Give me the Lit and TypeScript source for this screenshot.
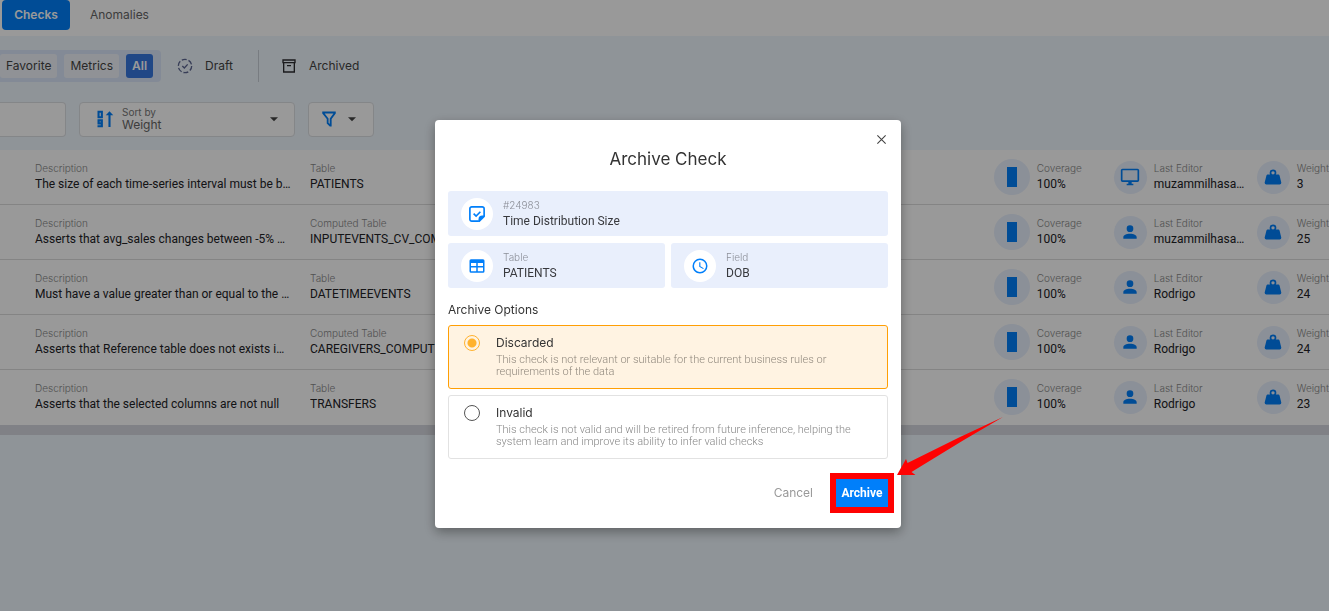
import { LitElement, html, svg, css } from "lit";
import { customElement, property, state } from "lit/decorators.js";
import { classMap } from "lit/directives/class-map.js";

type IconName = keyof typeof ICONS;

const ICONS = {
  account: svg`<path d="M12,4A4,4 0 0,1 16,8A4,4 0 0,1 12,12A4,4 0 0,1 8,8A4,4 0 0,1 12,4M12,14C16.42,14 20,15.79 20,18V20H4V18C4,15.79 7.58,14 12,14Z"/>`,
  weight: svg`<path d="M12,3A4,4 0 0,1 16,7C16,7.73 15.81,8.41 15.46,9H18C18.95,9 19.75,9.67 19.95,10.56C21.96,18.57 22,18.78 22,19A2,2 0 0,1 20,21H4A2,2 0 0,1 2,19C2,18.78 2.04,18.57 4.05,10.56C4.25,9.67 5.05,9 6,9H8.54C8.19,8.41 8,7.73 8,7A4,4 0 0,1 12,3M12,5A2,2 0 0,0 10,7A2,2 0 0,0 12,9A2,2 0 0,0 14,7A2,2 0 0,0 12,5Z"/>`,
  monitor: svg`<path d="M21,16H3V4H21M21,2H3C1.89,2 1,2.89 1,4V16A2,2 0 0,0 3,18H10V20H8V22H16V20H14V18H21A2,2 0 0,0 23,16V4C23,2.89 22.1,2 21,2Z"/>`,
  clock: svg`<path d="M12,20A8,8 0 0,0 20,12A8,8 0 0,0 12,4A8,8 0 0,0 4,12A8,8 0 0,0 12,20M12,2A10,10 0 0,1 22,12A10,10 0 0,1 12,22C6.47,22 2,17.5 2,12A10,10 0 0,1 12,2M12.5,7V12.25L17,14.92L16.25,16.15L11,13V7H12.5Z"/>`,
  filter: svg`<path fill-rule="evenodd" d="M3 2H21V4.6L15.5 12V22H13L9 18V12L3 4.6ZM6.2 4.5L11.4 11.2V17L13 18.6V11.2L17.9 4.5Z"/>`,
  table: svg`<path fill-rule="evenodd" d="M4 3H20A2 2 0 0 1 22 5V19A2 2 0 0 1 20 21H4A2 2 0 0 1 2 19V5A2 2 0 0 1 4 3M4 8V12H11V8ZM13 8V12H20V8ZM4 14V19H11V14ZM13 14V19H20V14Z"/>`,
  archive: svg`<path fill-rule="evenodd" d="M2 2H22V8H21V22H3V8H2ZM4 4V6H20V4ZM5 8V20H19V8ZM9 10.5H15V12.5H9Z"/>`,
  note: svg`<path fill="none" stroke="currentColor" stroke-width="2.2" d="M14.5 21.5H5A2.5 2.5 0 0 1 2.5 19V5A2.5 2.5 0 0 1 5 2.5H19A2.5 2.5 0 0 1 21.5 5V14.5"/><path d="M22.6 14V15.5L15.5 22.6H14V19A5 5 0 0 1 19 14Z"/><path fill="none" stroke="currentColor" stroke-width="2.2" d="M7.5 11.5L10.8 14.8L16.5 9"/>`,
  draft: svg`<circle cx="12" cy="12" r="10" fill="none" stroke="currentColor" stroke-width="2" stroke-dasharray="7.5 2.97"/><path fill="none" stroke="currentColor" stroke-width="2" d="M8 12L11 15L16 9.5"/>`,
  sort: svg`<path fill="none" stroke="currentColor" stroke-width="2.8" d="M3.4 2.4H7.8V9.6H3.4ZM7.8 17.8H3.4V13.8H7.8V21.6H2M18 22.5V4"/><path d="M13 7L18 1.5L23 7Z"/>`,
  caret: svg`<path d="M4 8.5H20L12 16.5Z"/>`,
  close: svg`<path fill="none" stroke="currentColor" stroke-width="2.4" d="M3 3L21 21M21 3L3 21"/>`,
};

@customElement("ui-icon")
class UiIcon extends LitElement {
  @property() name: IconName = "account";
  @property({ type: Number }) size = 16;

  static styles = css`
    :host {
      display: inline-flex;
      flex: none;
    }
    .glyph {
      display: block;
      fill: currentColor;
    }
  `;

  render() {
    return html`<svg class="glyph" width=${this.size} height=${this.size} viewBox="0 0 24 24" aria-hidden="true">${ICONS[this.name]}</svg>`;
  }
}

@customElement("labelled-value")
class LabelledValue extends LitElement {
  @property() label = "";
  @property() value = "";

  static styles = css`
    :host {
      display: block;
      min-width: 0;
      white-space: nowrap;
    }
    .label {
      font-size: 10px;
      line-height: 14px;
      font-weight: 300;
      color: var(--label-color, #888);
    }
    .value {
      font-family: Roboto, "Liberation Sans", sans-serif;
      font-size: 12px;
      line-height: 18px;
      font-weight: var(--value-weight, 450);
      color: var(--value-color, #222226);
    }
  `;

  render() {
    return html`<div class="label">${this.label}</div><div class="value">${this.value}</div>`;
  }
}

interface CheckRow {
  description: string;
  kind: string;
  table: string;
  editor: string;
  editorIcon: IconName;
  weight: string;
}

const CHECKS: CheckRow[] = [
  { description: "The size of each time-series interval must be b…", kind: "Table", table: "PATIENTS", editor: "muzammilhasa…", editorIcon: "monitor", weight: "3" },
  { description: "Asserts that avg_sales changes between -5% …", kind: "Computed Table", table: "INPUTEVENTS_CV_COMPUTED", editor: "muzammilhasa…", editorIcon: "account", weight: "25" },
  { description: "Must have a value greater than or equal to the …", kind: "Table", table: "DATETIMEEVENTS", editor: "Rodrigo", editorIcon: "account", weight: "24" },
  { description: "Asserts that Reference table does not exists i…", kind: "Computed Table", table: "CAREGIVERS_COMPUTED", editor: "Rodrigo", editorIcon: "account", weight: "24" },
  { description: "Asserts that the selected columns are not null", kind: "Table", table: "TRANSFERS", editor: "Rodrigo", editorIcon: "account", weight: "23" },
];

@customElement("check-list")
class CheckList extends LitElement {
  static styles = css`
    :host {
      display: block;
    }
    .list {
      list-style: none;
      margin: 0;
      padding: 0;
      background: #fff;
      border-bottom: 10px solid #d6d8df;
    }
    .row {
      display: flex;
      align-items: center;
      height: 54px;
      padding-left: 35px;
      overflow: hidden;
      border-bottom: 1px solid #dcdcdc;
    }
    .row:last-child {
      border-bottom-color: transparent;
    }
    .description {
      flex: 0 0 275px;
    }
    .table {
      flex: 1;
      overflow: hidden;
    }
    .coverage {
      flex: 0 0 120px;
    }
    .editor {
      flex: 0 0 143px;
    }
    .weight {
      flex: 0 0 71px;
    }
    .stats {
      display: flex;
      flex: 0 0 335px;
    }
    .stat {
      display: flex;
      align-items: center;
      gap: 7px;
    }
    .badge {
      display: flex;
      flex: none;
      align-items: center;
      justify-content: center;
      width: 33px;
      height: 33px;
      border-radius: 50%;
      background: #e8f0fd;
      color: #007ffa;
    }
    .gauge {
      width: 36px;
      height: 36px;
    }
    .bar {
      width: 10px;
      height: 20px;
      background: #007ffa;
    }
  `;

  render() {
    return html`<ul class="list">
      ${CHECKS.map(
        (c) => html`<li class="row">
          <labelled-value class="description" label="Description" value=${c.description}></labelled-value>
          <labelled-value class="table" label=${c.kind} value=${c.table}></labelled-value>
          <div class="stats">
            <div class="stat coverage">
              <span class="badge gauge"><span class="bar"></span></span>
              <labelled-value label="Coverage" value="100%"></labelled-value>
            </div>
            <div class="stat editor">
              <span class="badge"><ui-icon name=${c.editorIcon} size="20"></ui-icon></span>
              <labelled-value label="Last Editor" value=${c.editor}></labelled-value>
            </div>
            <div class="stat weight">
              <span class="badge"><ui-icon name="weight" size="20"></ui-icon></span>
              <labelled-value label="Weight" value=${c.weight}></labelled-value>
            </div>
          </div>
        </li>`
      )}
    </ul>`;
  }
}

const OPTIONS = [
  { id: "discarded", title: "Discarded", lines: ["This check is not relevant or suitable for the current business rules or", "requirements of the data"] },
  { id: "invalid", title: "Invalid", lines: ["This check is not valid and will be retired from future inference, helping the", "system learn and improve its ability to infer valid checks"] },
];

@customElement("archive-dialog")
class ArchiveDialog extends LitElement {
  @state() private choice = "discarded";

  static styles = css`
    :host {
      display: block;
      width: 466px;
      box-sizing: border-box;
      padding: 10px 13px 21px;
      border-radius: 4px;
      background: #fff;
      color: #333;
      box-shadow: 0 4px 12px rgba(0, 0, 0, 0.35);
    }
    .top {
      display: flex;
      justify-content: flex-end;
    }
    button {
      font: inherit;
      border: 0;
      background: none;
      cursor: pointer;
    }
    .close {
      display: flex;
      padding: 4px 1px 3px;
      color: #444;
    }
    .title {
      margin: 0 0 21px;
      font-size: 17px;
      line-height: 22px;
      font-weight: 400;
      text-align: center;
    }
    .cards {
      display: grid;
      grid-template-columns: 1fr 1fr;
      gap: 7px 6px;
      --label-color: #8c8f98;
      --value-color: #38393d;
      --value-weight: 400;
    }
    .card {
      display: flex;
      align-items: center;
      gap: 10px;
      height: 45px;
      padding-left: 13px;
      border-radius: 3px;
      background: #e9effc;
    }
    .wide {
      grid-column: 1 / -1;
    }
    .badge {
      display: flex;
      align-items: center;
      justify-content: center;
      width: 32px;
      height: 32px;
      border-radius: 50%;
      background: #fff;
      color: #007ffa;
    }
    .options {
      display: flex;
      flex-direction: column;
      gap: 6px;
      margin: 0;
      padding: 0;
      border: 0;
    }
    .heading {
      padding: 14px 0 7px;
      font-size: 12px;
      line-height: 16px;
    }
    .option {
      display: flex;
      gap: 16px;
      height: 64px;
      box-sizing: border-box;
      padding: 9px 15px;
      border: 1px solid #e2e2e2;
      border-radius: 3px;
      cursor: pointer;
    }
    .chosen {
      border-color: #ff9f05;
      background: #fff3e2;
    }
    .radio {
      appearance: none;
      flex: none;
      box-sizing: border-box;
      width: 16px;
      height: 16px;
      margin: 0;
      border: 1px solid #555;
      border-radius: 50%;
      background: #fff;
    }
    .radio:checked {
      border-color: #ffb22e;
      background: radial-gradient(circle, #ffb22e 4px, transparent 5px);
    }
    .name {
      display: block;
      font-size: 12px;
      line-height: 16px;
    }
    .hint {
      display: block;
      margin-top: 3px;
      font-family: Roboto, sans-serif;
      font-size: 11px;
      line-height: 12px;
      font-weight: 300;
      color: #888;
      white-space: nowrap;
    }
    .chosen .hint {
      color: #91897e;
    }
    .line {
      display: block;
    }
    .actions {
      display: flex;
      justify-content: flex-end;
      gap: 17px;
      margin-top: 20px;
      font-size: 12px;
      line-height: 28px;
    }
    .cancel {
      padding: 0 6px;
      color: #999;
    }
    .confirm-wrap {
      position: relative;
    }
    .confirm {
      display: block;
      width: 52px;
      padding: 0;
      background: #007ffa;
      color: #fff;
      font-family: Roboto, sans-serif;
      font-weight: 700;
      outline: 6px solid #fe0202;
      text-align: center;
    }
    .pointer {
      position: absolute;
      left: 100%;
      bottom: 100%;
      width: 116px;
      height: 64px;
      fill: #fe0202;
      pointer-events: none;
    }
  `;

  render() {
    return html`
      <div class="top">
        <button class="close" type="button" aria-label="Close"><ui-icon name="close" size="11"></ui-icon></button>
      </div>
      <h2 class="title">Archive Check</h2>
      <div class="cards">
        <div class="card wide">
          <span class="badge"><ui-icon name="note" size="18"></ui-icon></span>
          <labelled-value label="#24983" value="Time Distribution Size"></labelled-value>
        </div>
        <div class="card">
          <span class="badge"><ui-icon name="table" size="18"></ui-icon></span>
          <labelled-value label="Table" value="PATIENTS"></labelled-value>
        </div>
        <div class="card">
          <span class="badge"><ui-icon name="clock" size="18"></ui-icon></span>
          <labelled-value label="Field" value="DOB"></labelled-value>
        </div>
      </div>
      <div class="heading" id="options-heading">Archive Options</div>
      <div class="options" role="radiogroup" aria-labelledby="options-heading">
        ${OPTIONS.map(
          (o) => html`<label class=${classMap({ option: true, chosen: this.choice === o.id })} for=${o.id}>
            <input class="radio" type="radio" name="reason" id=${o.id} .checked=${this.choice === o.id} @change=${() => (this.choice = o.id)} />
            <span>
              <span class="name">${o.title}</span>
              <span class="hint">${o.lines.map((l) => html`<span class="line">${l}</span>`)}</span>
            </span>
          </label>`
        )}
      </div>
      <div class="actions">
        <button class="cancel" type="button">Cancel</button>
        <span class="confirm-wrap">
          <button class="confirm" type="button">Archive</button>
          <svg class="pointer" viewBox="0 0 116 64" aria-hidden="true">
            <path d="M115 2L72 22L19.500 48L18 44L9 60H27.500L23.500 57L75 25.500Z" />
          </svg>
        </span>
      </div>
    `;
  }
}

@customElement("app-root")
class AppRoot extends LitElement {
  static styles = css`
    :host {
      display: block;
      min-height: 100vh;
      overflow: hidden;
      background: #eff7fd;
      color: #444;
      font-family: Inter, "Liberation Sans", sans-serif;
      font-size: 12px;
      line-height: 16px;
    }
    button,
    select,
    input {
      font: inherit;
      color: inherit;
      border: 0;
      background: none;
      padding: 0;
    }
    .tabs {
      display: flex;
      align-items: flex-start;
      gap: 14px;
      height: 36px;
      padding-left: 2px;
      background: #fff;
    }
    .tab {
      height: 30px;
      padding: 0 6px;
      border-radius: 4px;
      color: #666;
    }
    .current {
      width: 68px;
      background: #007ffa;
      color: #fff;
      font-weight: 600;
    }
    .filters {
      display: flex;
      align-items: center;
      padding-top: 14px;
    }
    .group {
      display: flex;
      align-items: center;
      gap: 7px;
      height: 32px;
      padding-right: 8px;
      border-radius: 0 4px 4px 0;
      background: #dbe7fa;
    }
    .chip {
      height: 24px;
      padding: 0 6px;
      border-radius: 3px;
      background: #f1f4fa;
    }
    .picked {
      background: #3677e0;
      color: #fff;
      font-weight: 600;
    }
    .toggle {
      display: flex;
      align-items: center;
      gap: 12px;
      height: 32px;
    }
    .draft {
      padding: 0 25px 0 16px;
    }
    .draft ui-icon {
      color: #5c6691;
    }
    .archived {
      padding-left: 22px;
      border-left: 1px solid #c8cfd8;
    }
    .archived ui-icon {
      color: #2c2c30;
    }
    .fields {
      display: flex;
      gap: 13px;
      padding: 20px 0 13px;
    }
    .field {
      display: flex;
      align-items: center;
      box-sizing: border-box;
      height: 35px;
      border: 1px solid #dcdfe3;
      border-radius: 4px;
      background: #fff;
    }
    .search {
      width: 66px;
      border-left: 0;
      border-radius: 0 4px 4px 0;
    }
    .sort {
      width: 216px;
      padding: 0 14px 2px 16px;
      gap: 8px;
    }
    .accent {
      color: #007ffa;
    }
    .sort-text {
      flex: 1;
      color: #666;
    }
    .sort-label {
      display: block;
      font-size: 10px;
      line-height: 12px;
      color: #777;
    }
    .sort-select {
      appearance: none;
      display: block;
      width: 100%;
      height: 14px;
      line-height: 14px;
    }
    .menu {
      width: 66px;
      gap: 8px;
      padding: 0 0 2px 11px;
    }
    .scrim {
      position: fixed;
      inset: 0;
      display: flex;
      align-items: center;
      justify-content: center;
      padding: 37px 0 0 7px;
      background: rgba(0, 0, 0, 0.4);
    }
  `;

  render() {
    return html`
      <nav class="tabs">
        <button class="tab current" type="button">Checks</button>
        <button class="tab" type="button">Anomalies</button>
      </nav>
      <div class="filters">
        <div class="group">
          <button class="chip" type="button">Favorite</button>
          <button class="chip" type="button">Metrics</button>
          <button class="chip picked" type="button">All</button>
        </div>
        <button class="toggle draft" type="button"><ui-icon name="draft" size="16"></ui-icon>Draft</button>
        <button class="toggle archived" type="button"><ui-icon name="archive" size="16"></ui-icon>Archived</button>
      </div>
      <div class="fields">
        <input class="field search" type="text" aria-label="Search" />
        <div class="field sort">
          <ui-icon class="accent" name="sort" size="18"></ui-icon>
          <div class="sort-text">
            <label class="sort-label" for="sort">Sort by</label>
            <select class="sort-select" id="sort">
              <option>Weight</option>
            </select>
          </div>
          <ui-icon name="caret" size="12"></ui-icon>
        </div>
        <button class="field menu" type="button" aria-label="Filter">
          <ui-icon class="accent" name="filter" size="18"></ui-icon>
          <ui-icon name="caret" size="12"></ui-icon>
        </button>
      </div>
      <check-list></check-list>
      <div class="scrim">
        <archive-dialog role="dialog" aria-label="Archive Check"></archive-dialog>
      </div>
    `;
  }
}
